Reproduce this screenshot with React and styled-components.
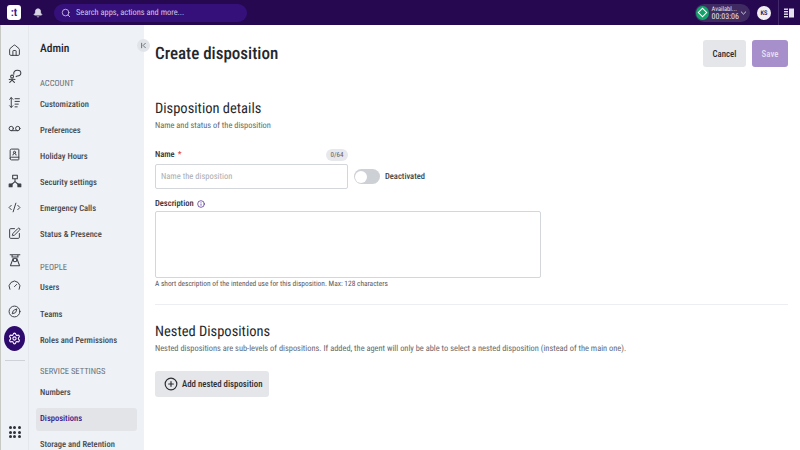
import React from "react";
import styled, { createGlobalStyle } from "styled-components";
import {
  Bell,
  Search,
  House,
  Voicemail,
  BookUser,
  CodeXml,
  SquarePen,
  Gauge,
  Compass,
  Settings,
  ChevronDown,
  ChevronFirst,
  Info,
  CirclePlus,
} from "lucide-react";

const GlobalStyle = createGlobalStyle`
  html, body {
    margin: 0;
    padding: 0;
    height: 100%;
    overflow: hidden;
    font-family: Roboto, "Liberation Sans", sans-serif;
    font-stretch: 87%;
    text-rendering: geometricPrecision;
    background: #fff;
  }
`;

const Page = styled.div`
  width: 800px;
  height: 450px;
  display: flex;
  flex-direction: column;
  overflow: hidden;
  opacity: 0.999;
`;

const TopBar = styled.header`
  height: 25px;
  flex: none;
  background: #25084f;
  display: flex;
  align-items: center;
  padding: 0 5px 0 7px;
`;

const Logo = styled.div`
  width: 14px;
  height: 15px;
  border-radius: 3px;
  background: #fff;
  color: #3d1a8c;
  font-size: 11px;
  font-weight: 700;
  line-height: 15px;
  text-align: center;
`;

const BellWrap = styled.div`
  margin-left: 12px;
  display: flex;
  color: #d9d5e4;
`;

const SearchBox = styled.div`
  margin-left: 11px;
  width: 193px;
  height: 18px;
  box-sizing: border-box;
  border-radius: 9px;
  background: #35107a;
  color: #cfc6e6;
  display: flex;
  align-items: center;
  gap: 5px;
  padding-left: 7px;
  font-size: 8.4px;
`;

const StatusPill = styled.div`
  margin-left: auto;
  width: 55px;
  height: 18px;
  border-radius: 9px;
  background: #3f2a62;
  display: flex;
  align-items: center;
  color: #fff;
`;

const StatusDot = styled.div`
  width: 14px;
  height: 14px;
  margin-left: 1px;
  border-radius: 50%;
  background: #12a36b;
  display: flex;
  align-items: center;
  justify-content: center;
`;

const Diamond = styled.div`
  width: 5px;
  height: 5px;
  background: #12a36b;
  border: 1.5px solid #fff;
  transform: rotate(45deg);
`;

const StatusText = styled.div`
  margin-left: 3px;
  flex: 1;
  font-size: 6.5px;
  line-height: 8px;
  color: #e6e0ef;
`;

const StatusTime = styled.div`
  font-size: 8px;
`;

const Avatar = styled.div`
  margin-left: 7px;
  width: 14px;
  height: 14px;
  border-radius: 50%;
  background: #f1eff4;
  color: #25084f;
  font-size: 6.5px;
  font-weight: 500;
  display: flex;
  align-items: center;
  justify-content: center;
`;

const PanelToggle = styled.div`
  margin-left: 7px;
  padding-left: 4px;
  height: 25px;
  display: flex;
  align-items: center;
  border-left: 1px solid #43296b;
`;

const Body = styled.div`
  flex: 1;
  min-height: 0;
  display: flex;
`;

const Rail = styled.nav`
  width: 29px;
  flex: none;
  box-sizing: border-box;
  background: #eef1f5;
  border-left: 1px solid #c6c9c4;
  border-right: 1px solid #e4e7ec;
  display: flex;
  flex-direction: column;
  align-items: center;
  padding-top: 12px;
  color: #3b3f46;
`;

const RailItem = styled.div`
  height: 26.2px;
  flex: none;
  display: flex;
  align-items: center;
  justify-content: center;
`;

const RailActive = styled.div`
  width: 21px;
  height: 25px;
  flex: none;
  margin-top: 1px;
  border-radius: 50%;
  background: #2f0a6e;
  color: #fff;
  display: flex;
  align-items: center;
  justify-content: center;
`;

const RailDivider = styled.div`
  width: 20px;
  height: 1px;
  margin-top: 9px;
  background: #cfd3d9;
`;

const Apps = styled.div`
  margin-top: auto;
  margin-bottom: 12px;
  display: grid;
  grid-template-columns: repeat(3, 3px);
  gap: 1.5px;
`;

const AppDot = styled.span`
  width: 3px;
  height: 3px;
  border-radius: 50%;
  background: #2e3138;
`;

const Sidebar = styled.aside`
  width: 115px;
  flex: none;
  background: #eef1f5;
  padding: 15px 7px 0 7px;
  box-sizing: border-box;
  position: relative;
`;

const Collapse = styled.div`
  position: absolute;
  top: 14px;
  right: -6px;
  width: 13px;
  height: 13px;
  border-radius: 50%;
  background: #e1e4e9;
  color: #4a4e57;
  display: flex;
  align-items: center;
  justify-content: center;
`;

const SideTitle = styled.div`
  padding-left: 4px;
  font-size: 11.5px;
  font-weight: 500;
  line-height: 16px;
  color: #24262b;
`;

const SectionLabel = styled.div`
  margin-top: ${(p) => p.$top}px;
  margin-bottom: 3px;
  padding-left: 4px;
  font-size: 8.5px;
  line-height: 12px;
  color: #6d7178;
`;

const SideLink = styled.div`
  height: 23px;
  margin-bottom: 3.2px;
  padding-left: 4px;
  border-radius: 3px;
  display: flex;
  align-items: center;
  font-size: 8.5px;
  font-weight: 500;
  white-space: nowrap;
  color: ${(p) => (p.$active ? "#3b1387" : "#44474d")};
  background: ${(p) => (p.$active ? "#e2e4e8" : "transparent")};
`;

const Main = styled.main`
  flex: 1;
  min-width: 0;
  background: #fff;
  padding: 15px 12px 0 11px;
`;

const Header = styled.div`
  display: flex;
  align-items: center;
  justify-content: space-between;
  height: 27px;
`;

const PageTitle = styled.h1`
  margin: 0;
  font-size: 17px;
  font-weight: 500;
  color: #25272c;
`;

const Actions = styled.div`
  display: flex;
  gap: 6px;
`;

const Button = styled.button`
  height: 27px;
  width: ${(p) => p.$w}px;
  padding: 0;
  border: 0;
  border-radius: 3px;
  font-family: inherit;
  font-stretch: inherit;
  font-size: 8.8px;
  font-weight: 500;
  color: ${(p) => (p.$primary ? "#e6def2" : "#2b2d33")};
  background: ${(p) => (p.$primary ? "#a68fca" : "#e4e6ea")};
`;

const SectionTitle = styled.h2`
  margin: ${(p) => p.$top}px 0 0;
  font-size: 14.5px;
  line-height: 18px;
  font-weight: 400;
  color: #25272c;
`;

const SectionHint = styled.p`
  margin: 2px 0 0;
  font-size: 8.4px;
  line-height: 12px;
  color: #63676e;
  white-space: nowrap;
`;

const NameHead = styled.div`
  width: 193px;
  margin-top: 16px;
  height: 14px;
  display: flex;
  align-items: center;
  justify-content: space-between;
`;

const FieldLabel = styled.label`
  display: flex;
  align-items: center;
  gap: 3px;
  font-size: 8.5px;
  font-weight: 500;
  color: #2b2d33;
`;

const Required = styled.span`
  color: #d23a3a;
`;

const Counter = styled.span`
  width: 22px;
  height: 12px;
  border-radius: 6px;
  background: #e6e8ec;
  color: #5c6067;
  font-size: 7px;
  line-height: 12px;
  text-align: center;
`;

const NameRow = styled.div`
  margin-top: 2px;
  display: flex;
  align-items: center;
`;

const NameInput = styled.div`
  width: 193px;
  height: 25px;
  box-sizing: border-box;
  border: 1px solid #d3d6db;
  border-radius: 2px;
  padding: 1px 0 0 5px;
  display: flex;
  align-items: center;
  font-size: 8.5px;
  color: #a9acb2;
`;

const Toggle = styled.div`
  margin-left: 6px;
  width: 26px;
  height: 15px;
  border-radius: 8px;
  background: #cdd0d5;
  display: flex;
  align-items: center;
  padding-left: 1px;
  box-sizing: border-box;
`;

const Knob = styled.div`
  width: 12px;
  height: 12px;
  border-radius: 50%;
  background: #fff;
`;

const ToggleLabel = styled.span`
  margin-left: 5px;
  font-size: 8.5px;
  font-weight: 500;
  color: #3c3f45;
`;

const DescLabel = styled(FieldLabel)`
  margin-top: 8px;
  height: 14px;
`;

const TextArea = styled.div`
  width: 386px;
  height: 67px;
  box-sizing: border-box;
  border: 1px solid #d3d6db;
  border-radius: 2px;
`;

const Help = styled.p`
  margin: 1px 0 0;
  font-size: 7.4px;
  line-height: 10px;
  color: #55595f;
`;

const Rule = styled.hr`
  margin: 15px 0 0;
  border: 0;
  height: 1px;
  background: #eceef1;
`;

const AddButton = styled.button`
  margin-top: 16px;
  width: 114px;
  height: 26px;
  padding: 0 0 0 9px;
  border: 0;
  border-radius: 3px;
  background: #e4e6ea;
  color: #2b2d33;
  font-family: inherit;
  font-stretch: inherit;
  font-size: 8.8px;
  font-weight: 500;
  white-space: nowrap;
  display: flex;
  align-items: center;
  gap: 4px;
`;

const SpeakerIcon = () => (
  <svg width="14" height="14" viewBox="0 0 24 24" fill="none" stroke="currentColor" strokeWidth="1.8" strokeLinecap="round">
    <path d="M10 9c-1-4 2-7 6-7s6 2 6 5-3 5-6 5l-2 1" />
    <circle cx="7" cy="13" r="2.5" />
    <path d="M2 18l5-1 5 1M7 17v2l-4 4M7 19l4 4" />
  </svg>
);

const SortListIcon = () => (
  <svg width="13" height="13" viewBox="0 0 24 24" fill="none" stroke="currentColor" strokeWidth="1.8" strokeLinecap="round" strokeLinejoin="round">
    <path d="M6 3v18M3 6l3-3 3 3M3 18l3 3 3-3" />
    <path d="M13 5h8M13 10h8M13 15h6M13 20h4" />
  </svg>
);

const RoutingIcon = () => (
  <svg width="14" height="14" viewBox="0 0 24 24" fill="none" stroke="currentColor" strokeWidth="1.8" strokeLinejoin="round">
    <rect x="8" y="2" width="8" height="6" />
    <path d="M12 8v5M12 13l-6 5M12 13l6 5" />
    <rect x="2" y="17" width="5" height="5" fill="currentColor" />
    <rect x="17" y="17" width="5" height="5" fill="currentColor" />
  </svg>
);

const AgentIcon = () => (
  <svg width="14" height="14" viewBox="0 0 24 24" fill="none" stroke="currentColor" strokeWidth="1.8">
    <path d="M3 3h18M7 3v4h10V3M9 9l-5 13M15 9l5 13M4 22h16" />
    <circle cx="12" cy="12" r="3" />
  </svg>
);

const ColumnsIcon = () => (
  <svg width="12" height="12" viewBox="0 0 12 12" fill="#e6e0ef">
    <rect x="1" y="1.5" width="4" height="1.4" />
    <rect x="1" y="4" width="4" height="1.4" />
    <rect x="1" y="6.5" width="4" height="1.4" />
    <rect x="1" y="9" width="4" height="1.4" />
    <rect x="6" y="1.5" width="5" height="9" />
  </svg>
);

const accountLinks = [
  "Customization",
  "Preferences",
  "Holiday Hours",
  "Security settings",
  "Emergency Calls",
  "Status & Presence",
];

const App = () => {
  return (
    <Page>
      <GlobalStyle />
      <TopBar>
        <Logo>:t</Logo>
        <BellWrap>
          <Bell size={10} fill="currentColor" />
        </BellWrap>
        <SearchBox>
          <Search size={10} />
          Search apps, actions and more...
        </SearchBox>
        <StatusPill>
          <StatusDot>
            <Diamond />
          </StatusDot>
          <StatusText>
            Availabl...
            <StatusTime>00:03:06</StatusTime>
          </StatusText>
          <ChevronDown size={10} style={{ marginRight: 2 }} />
        </StatusPill>
        <Avatar>KS</Avatar>
        <PanelToggle>
          <ColumnsIcon />
        </PanelToggle>
      </TopBar>
      <Body>
        <Rail>
          <RailItem><House size={13} strokeWidth={1.8} /></RailItem>
          <RailItem><SpeakerIcon /></RailItem>
          <RailItem><SortListIcon /></RailItem>
          <RailItem><Voicemail size={13} strokeWidth={1.8} /></RailItem>
          <RailItem><BookUser size={13} strokeWidth={1.8} /></RailItem>
          <RailItem><RoutingIcon /></RailItem>
          <RailItem><CodeXml size={13} strokeWidth={1.8} /></RailItem>
          <RailItem><SquarePen size={13} strokeWidth={1.8} /></RailItem>
          <RailItem><AgentIcon /></RailItem>
          <RailItem><Gauge size={13} strokeWidth={1.8} /></RailItem>
          <RailItem><Compass size={13} strokeWidth={1.8} /></RailItem>
          <RailActive><Settings size={13} /></RailActive>
          <RailDivider />
          <Apps>
            {Array.from({ length: 9 }, (_, i) => (
              <AppDot key={i} />
            ))}
          </Apps>
        </Rail>
        <Sidebar>
          <Collapse><ChevronFirst size={9} /></Collapse>
          <SideTitle>Admin</SideTitle>
          <SectionLabel $top={22}>ACCOUNT</SectionLabel>
          {accountLinks.map((l) => (
            <SideLink key={l}>{l}</SideLink>
          ))}
          <SectionLabel $top={15}>PEOPLE</SectionLabel>
          <SideLink>Users</SideLink>
          <SideLink>Teams</SideLink>
          <SideLink>Roles and Permissions</SideLink>
          <SectionLabel $top={14}>SERVICE SETTINGS</SectionLabel>
          <SideLink>Numbers</SideLink>
          <SideLink $active>Dispositions</SideLink>
          <SideLink>Storage and Retention</SideLink>
        </Sidebar>
        <Main>
          <Header>
            <PageTitle>Create disposition</PageTitle>
            <Actions>
              <Button $w={43}>Cancel</Button>
              <Button $w={36} $primary>Save</Button>
            </Actions>
          </Header>
          <SectionTitle $top={33}>Disposition details</SectionTitle>
          <SectionHint>Name and status of the disposition</SectionHint>
          <NameHead>
            <FieldLabel>Name <Required>*</Required></FieldLabel>
            <Counter>0/64</Counter>
          </NameHead>
          <NameRow>
            <NameInput>Name the disposition</NameInput>
            <Toggle><Knob /></Toggle>
            <ToggleLabel>Deactivated</ToggleLabel>
          </NameRow>
          <DescLabel>Description <Info size={8} color="#3b1387" /></DescLabel>
          <TextArea />
          <Help>A short description of the intended use for this disposition. Max: 128 characters</Help>
          <Rule />
          <SectionTitle $top={18}>Nested Dispositions</SectionTitle>
          <SectionHint>
            Nested dispositions are sub-levels of dispositions. If added, the agent will only be able to select a nested disposition (instead of the main one).
          </SectionHint>
          <AddButton>
            <CirclePlus size={14} />
            Add nested disposition
          </AddButton>
        </Main>
      </Body>
    </Page>
  );
};

export default App;
